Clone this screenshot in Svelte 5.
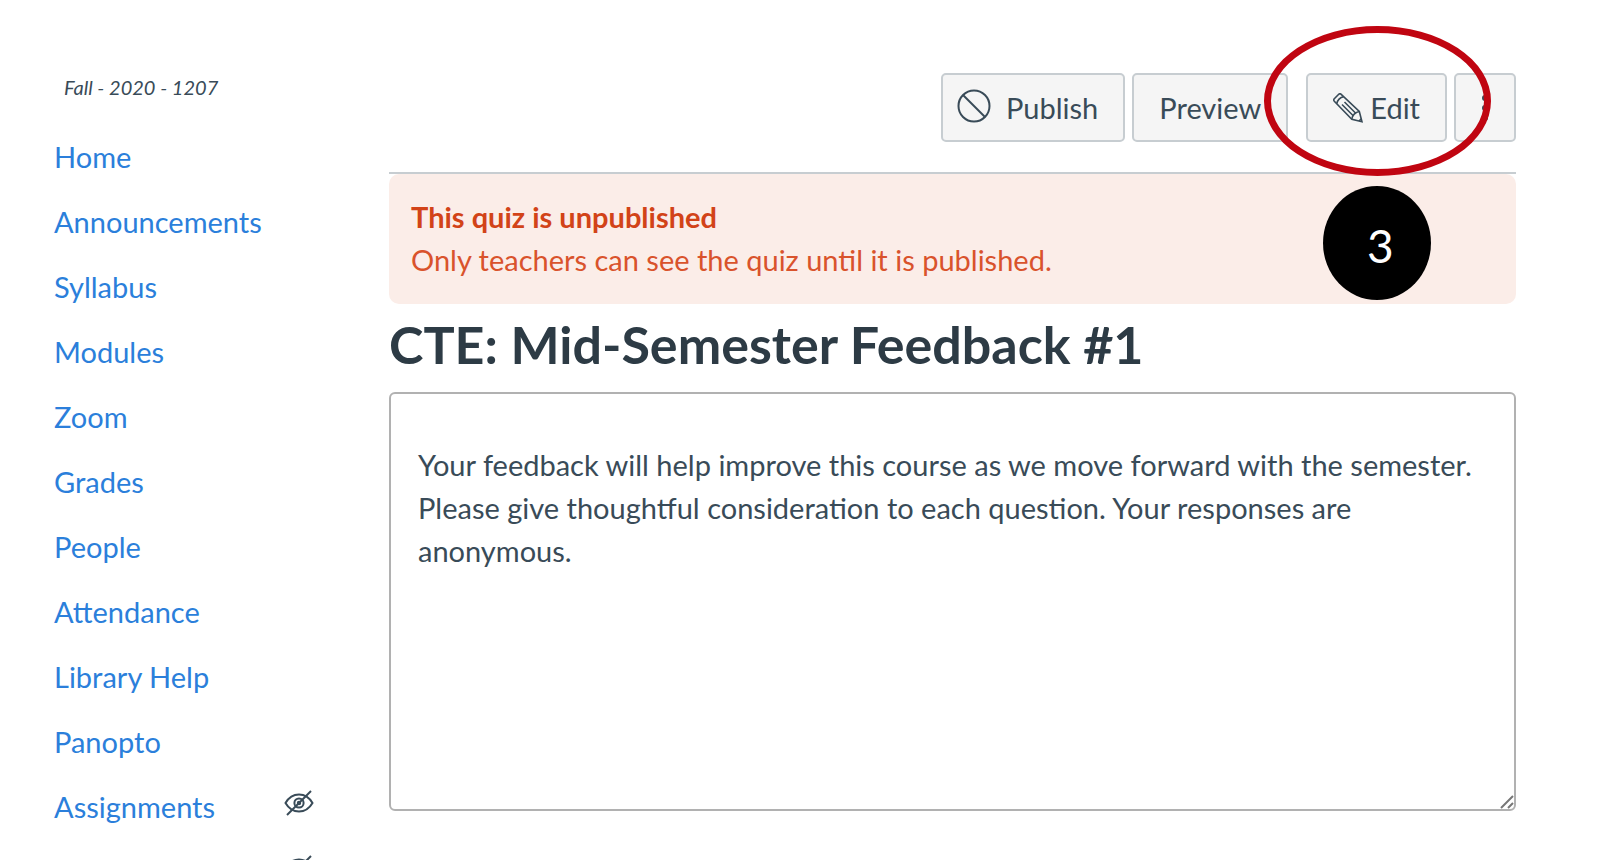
<script>
  const links = [
    { label: 'Home' },
    { label: 'Announcements' },
    { label: 'Syllabus' },
    { label: 'Modules' },
    { label: 'Zoom' },
    { label: 'Grades' },
    { label: 'People' },
    { label: 'Attendance' },
    { label: 'Library Help' },
    { label: 'Panopto' },
    { label: 'Assignments', hidden: true },
    { label: '', hidden: true }
  ];

  let instructions = $state(
    'Your feedback will help improve this course as we move forward with the semester. Please give thoughtful consideration to each question. Your responses are anonymous.'
  );
</script>

<div class="layout">
  <aside>
    <p class="term">Fall - 2020 - 1207</p>
    <nav>
      <ul>
        {#each links as link}
          <li>
            <a href="#top">{link.label}</a>
            {#if link.hidden}
              <svg class="eye" viewBox="0 0 30 26" width="30" height="26" aria-hidden="true">
                <path d="M1.500 13C5 7 9.500 4.500 15 4.500S25 7 28.500 13C25 19 20.500 21.500 15 21.500S5 19 1.500 13Z" />
                <circle cx="15" cy="13" r="4.600" />
                <circle cx="15" cy="13" r="1.200" />
                <path d="M3 25 27 1" />
              </svg>
            {/if}
          </li>
        {/each}
      </ul>
    </nav>
  </aside>

  <main>
    <div class="toolbar">
      <button class="btn">
        <svg class="ban" viewBox="0 0 34 34" width="34" height="34" aria-hidden="true">
          <circle cx="17" cy="17" r="15.500" />
          <path d="M6 6 28 28" />
        </svg>
        Publish
      </button>
      <button class="btn">Preview</button>
      <div class="edit">
        <button class="btn">
          <svg class="pencil" viewBox="0 0 30 30" width="30" height="30" aria-hidden="true">
            <path d="M1.300 8.200C.6 7.400.6 6.500 1.300 5.700L5.700 1.300C6.500.6 7.400.6 8.200 1.300L26.300 18.500 29 28.800 18.800 26.300Z" />
            <path d="M3.800 10.600C4.200 7.200 7.200 4.200 10.600 3.800" />
            <path d="M9 11.500 20.500 23M11.500 9 23 20.500" />
            <path d="M18.800 26.300C19 22.500 22.500 19 26.300 18.500" />
            <path d="M26 28 28.300 25.700" />
          </svg>
          Edit
        </button>
        <span class="ring"></span>
        <span class="step">3</span>
      </div>
      <button class="btn more" aria-label="More options">
        <svg viewBox="0 0 8 26" width="8" height="26" aria-hidden="true">
          <circle cx="4" cy="3" r="3" />
          <circle cx="4" cy="13" r="3" />
          <circle cx="4" cy="23" r="3" />
        </svg>
      </button>
    </div>

    <div class="alert">
      <strong>This quiz is unpublished</strong>
      <p>Only teachers can see the quiz until it is published.</p>
    </div>

    <h1>CTE: Mid-Semester Feedback #1</h1>

    <div class="field">
      <textarea aria-label="Quiz instructions" bind:value={instructions}></textarea>
      <svg class="grip" viewBox="0 0 14 14" width="14" height="14" aria-hidden="true">
        <path d="M1 13 13 1M8 13 13 8" />
      </svg>
    </div>
  </main>
</div>

<style>
  :global(body) {
    margin: 0;
    background: #fff;
    color: #394b58;
    font-family: Lato, 'Liberation Sans', sans-serif;
    font-size: 29px;
    line-height: 43px;
  }

  .layout {
    display: flex;
    gap: 56px;
    height: 100vh;
    box-sizing: border-box;
    padding: 73px 108px 0 54px;
    overflow: hidden;
  }

  aside {
    flex: 0 0 279px;
  }

  .term {
    margin: 0 0 34px;
    padding-left: 10px;
    font-size: 20px;
    font-style: italic;
    line-height: 28px;
  }

  ul {
    margin: 0;
    padding: 0;
    list-style: none;
  }

  li {
    display: flex;
    justify-content: space-between;
    height: 65px;
    padding-right: 19px;
  }

  a {
    color: #2b7fdb;
    text-decoration: none;
  }

  svg {
    flex: none;
    fill: none;
    stroke: #394b58;
    stroke-width: 2;
  }

  .eye {
    margin-top: 5px;
  }

  main {
    flex: 1;
    min-width: 0;
  }

  .toolbar {
    display: flex;
    justify-content: flex-end;
    gap: 7px;
    padding-bottom: 30px;
    border-bottom: 2px solid #c7cdd1;
  }

  .btn {
    display: flex;
    align-items: center;
    height: 69px;
    padding: 0 25px;
    border: 2px solid #c7cdd1;
    border-radius: 5px;
    background: #f5f5f5;
    color: #394b58;
    font: inherit;
    cursor: pointer;
  }

  .ban {
    margin: 0 15px 4px -11px;
  }

  .edit {
    position: relative;
    margin-left: 11px;
  }

  .pencil {
    margin-right: 7px;
    stroke-width: 1.6;
  }

  .more svg {
    fill: #394b58;
    stroke: none;
  }

  .ring {
    position: absolute;
    top: -47px;
    left: -42px;
    width: 227px;
    height: 150px;
    box-sizing: border-box;
    border: 7px solid #c00511;
    border-radius: 50%;
    pointer-events: none;
    z-index: 1;
  }

  .step {
    position: absolute;
    top: 113px;
    left: 17px;
    width: 108px;
    height: 114px;
    box-sizing: border-box;
    padding: 8px 0 0 6px;
    border-radius: 50%;
    background: #000;
    color: #fff;
    font-size: 46px;
    line-height: 104px;
    text-align: center;
  }

  .alert {
    padding: 21px 22px 23px;
    border-radius: 10px;
    background: #fbede8;
    color: #d9532c;
  }

  .alert strong {
    display: block;
    color: #d24318;
  }

  .alert p {
    margin: 0;
  }

  h1 {
    margin: 9px 0 17px;
    color: #2d3b45;
    font-size: 52px;
    line-height: 62px;
  }

  .field {
    position: relative;
  }

  textarea {
    display: block;
    width: 100%;
    height: 419px;
    box-sizing: border-box;
    padding: 49px 27px;
    border: 2px solid #b1b1b1;
    border-radius: 6px;
    background: #fff;
    color: #394b58;
    font: inherit;
    resize: none;
  }

  .grip {
    position: absolute;
    right: 2px;
    bottom: 2px;
    stroke: #777;
  }
</style>
